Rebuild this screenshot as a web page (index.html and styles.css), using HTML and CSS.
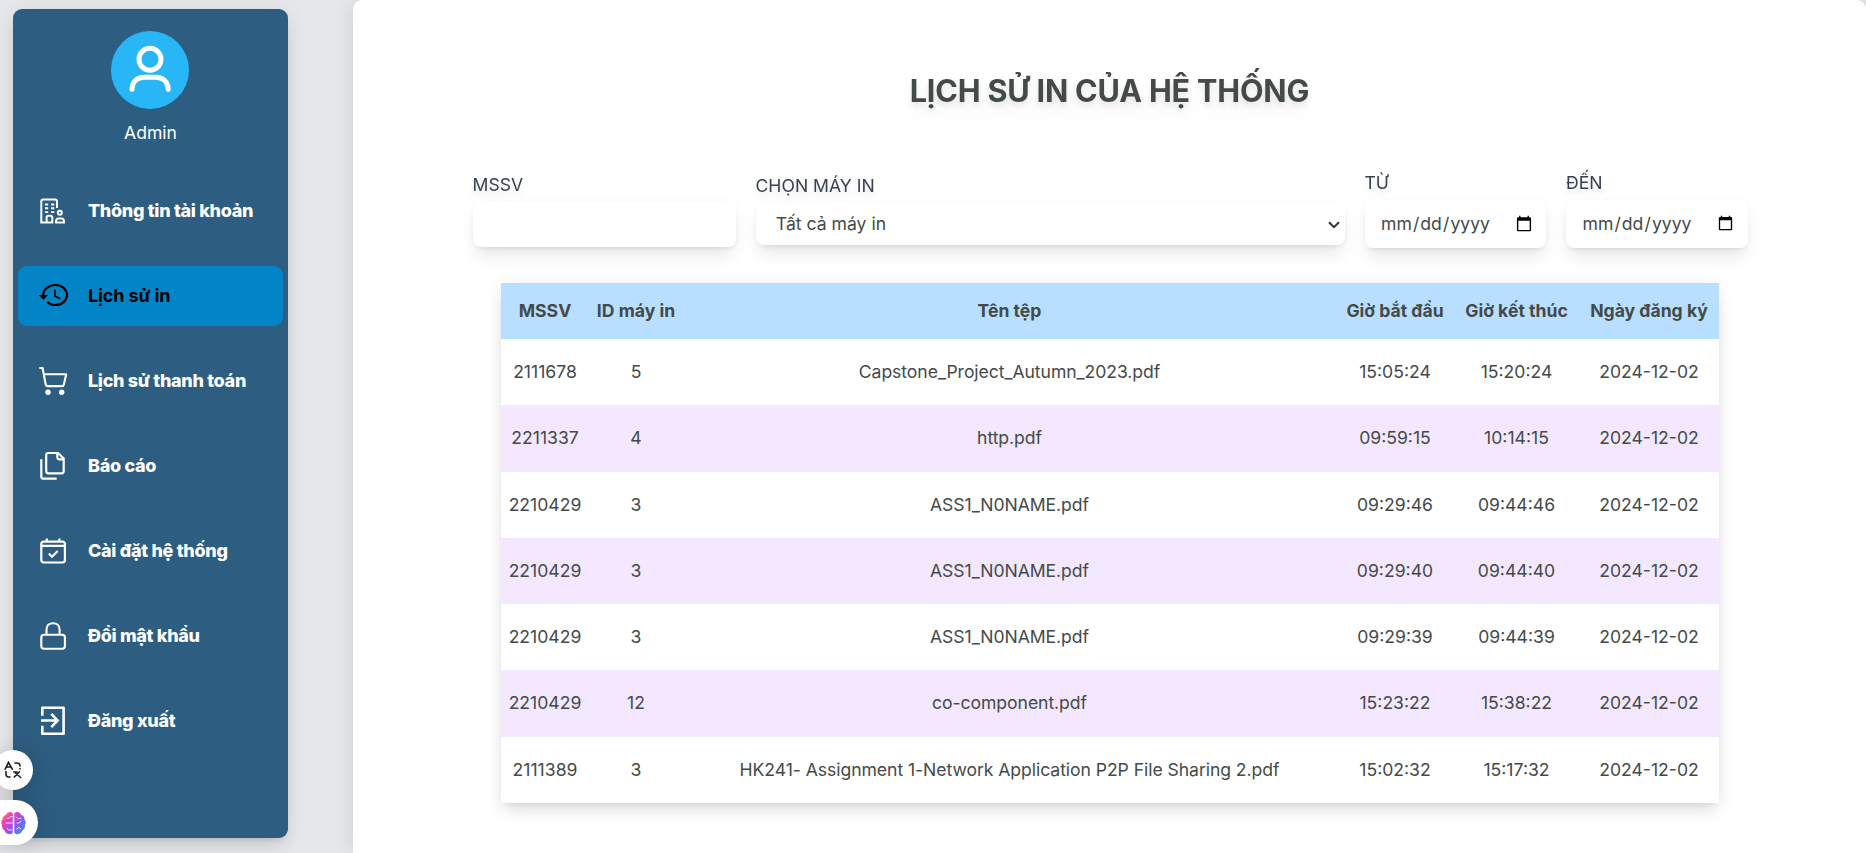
FILE: index.html
```html
<!DOCTYPE html>
<html lang="en-US">
<head>
<meta charset="utf-8">
<title>Lịch sử in</title>
<link rel="stylesheet" href="styles.css">
</head>
<body>
<div class="app">
  <aside class="sidebar">
    <div class="profile">
      <svg class="avatar" viewBox="0 0 78 78"><circle cx="39" cy="39" r="39" fill="#29b6f6"/><g fill="none" stroke="#fff" stroke-width="5" stroke-linecap="round"><circle cx="39" cy="28.3" r="11"/><path d="M21 58.2C21 51 26 46.3 33 46.3h12c7 0 12.200 4.700 12.200 11.900"/></g></svg>
      <span class="profile-name">Admin</span>
    </div>
    <nav class="menu">
      <a class="item"><svg class="icon" viewBox="0 0 30 30"><g stroke-width="2"><path d="M19 12V5.500Q19 3.500 17 3.500H5Q3.300 3.500 3.300 5.500V26.500H14.300V21.500Q14.300 19.700 12.300 19.700H10.500Q8.600 19.700 8.600 21.500V26.500"/><circle cx="21.800" cy="16.700" r="2" /><path d="M18 26.500Q17.700 22.500 20.500 22.500H23.500Q26.300 22.500 26 26.500Z"/></g><path stroke-width="1.900" stroke-dasharray="3.200 2.900" d="M7 8.500h9.500M7 12.300h9.500M7 16.100h9.500"/></svg><span>Thông tin tài khoản</span></a>
      <a class="item active"><svg class="icon" viewBox="0 0 30 30"><path stroke-width="2.200" d="M5.300 14C5.300 8.500 10.500 4 17.300 4S29 8.500 29 14 23.800 24 17.300 24Q12.500 24 9.300 21.200"/><path d="M.5 14H10.200L5.400 18.700Z" fill="currentColor" stroke="none"/><path stroke-width="1.800" d="M16.900 8.700V15L22.300 17.700"/></svg><span>Lịch sử in</span></a>
      <a class="item"><svg class="icon" viewBox="0 0 30 30"><path stroke-width="2.100" stroke-linejoin="round" d="M1.300 2H4.600L7.700 18.500Q8 20.100 9.600 20.100H24Q25.500 20.100 25.800 18.700L28.200 8.300H5.800"/><g fill="currentColor" stroke="none"><circle cx="10" cy="26.300" r="2.700"/><circle cx="23.700" cy="26.300" r="2.700"/></g></svg><span>Lịch sử thanh toán</span></a>
      <a class="item"><svg class="icon" viewBox="0 0 30 30"><g stroke-width="2.200"><path d="M10.500 2H20L25.700 7.500V20Q25.700 22.400 23.300 22.400H10.500Q8.200 22.400 8.200 20V4.300Q8.200 2 10.500 2ZM19.300 2V6Q19.300 8.300 21.600 8.300H25.600M3.300 8.300V25.400Q3.300 27.700 5.600 27.700H18.700"/></g></svg><span>Báo cáo</span></a>
      <a class="item"><svg class="icon" viewBox="0 0 30 30"><g stroke-width="2.200"><rect x="3.300" y="5.600" width="23.600" height="20.900" rx="2.500"/><path d="M3.300 9.800H27M8.800 2.500V5.600M21.400 2.500V5.600M10.800 17.500l3.200 3.200 5.700-5.700"/></g></svg><span>Cài đặt hệ thống</span></a>
      <a class="item"><svg class="icon" viewBox="0 0 30 30"><g stroke-width="2.100"><rect x="3.300" y="13.700" width="23.600" height="14" rx="2.700"/><path d="M8.500 13.700V8.500C8.500 4.500 11.300 2.200 15 2.200S21.600 4.500 21.600 8.500V13.700"/></g></svg><span>Đổi mật khẩu</span></a>
      <a class="item"><svg class="icon" viewBox="0 0 30 30"><g stroke-width="2.600"><path stroke-linejoin="round" d="M4.300 9.800V1.700H25.600V27.700H4.300V19.800"/><path d="M3 14.500H19.500M13.300 7.900L19.600 14.500 13.300 21.200"/></g></svg><span>Đăng xuất</span></a>
    </nav>
  </aside>

  <main class="panel">
    <h1 class="title">LỊCH SỬ IN CỦA HỆ THỐNG</h1>
    <form class="filters">
      <div class="field field-id"><label class="label" for="mssv">MSSV</label><input class="control text-input" id="mssv" type="text"></div>
      <div class="field field-printer"><label class="label" for="printer">CHỌN MÁY IN</label><div class="select-wrap"><select class="control select" id="printer"><option>Tất cả máy in</option></select><svg class="chevron" width="12" height="8" viewBox="0 0 12 8"><path d="M1 1.200L6 6.200 11 1.200" fill="none" stroke="#333" stroke-width="2"/></svg></div></div>
      <div class="field field-date"><label class="label" for="from">TỪ</label><input class="control date" id="from" type="date"></div>
      <div class="field field-date"><label class="label" for="to">ĐẾN</label><input class="control date" id="to" type="date"></div>
    </form>
    <table class="history">
      <colgroup><col class="c-id"><col class="c-printer"><col class="c-file"><col class="c-start"><col class="c-end"><col class="c-day"></colgroup>
      <thead><tr><th>MSSV</th><th>ID máy in</th><th>Tên tệp</th><th>Giờ bắt đầu</th><th>Giờ kết thúc</th><th>Ngày đăng ký</th></tr></thead>
      <tbody>
        <tr><td>2111678</td><td>5</td><td>Capstone_Project_Autumn_2023.pdf</td><td>15:05:24</td><td>15:20:24</td><td>2024-12-02</td></tr>
        <tr><td>2211337</td><td>4</td><td>http.pdf</td><td>09:59:15</td><td>10:14:15</td><td>2024-12-02</td></tr>
        <tr><td>2210429</td><td>3</td><td>ASS1_N0NAME.pdf</td><td>09:29:46</td><td>09:44:46</td><td>2024-12-02</td></tr>
        <tr><td>2210429</td><td>3</td><td>ASS1_N0NAME.pdf</td><td>09:29:40</td><td>09:44:40</td><td>2024-12-02</td></tr>
        <tr><td>2210429</td><td>3</td><td>ASS1_N0NAME.pdf</td><td>09:29:39</td><td>09:44:39</td><td>2024-12-02</td></tr>
        <tr><td>2210429</td><td>12</td><td>co-component.pdf</td><td>15:23:22</td><td>15:38:22</td><td>2024-12-02</td></tr>
        <tr><td>2111389</td><td>3</td><td>HK241- Assignment 1-Network Application P2P File Sharing 2.pdf</td><td>15:02:32</td><td>15:17:32</td><td>2024-12-02</td></tr>
      </tbody>
    </table>
  </main>
</div>

<div class="float translate"><svg width="18" height="18" viewBox="0 0 18 18" fill="none" stroke="#1c1c1c" stroke-width="1.600" stroke-linecap="round"><path d="M1.200 8.200L4.500 1.300 8.300 8.200M2.600 6H7M11 2H13Q16 2 16 5M16 7.500V8M2 10.500V13Q2 16 4.500 16H6M10.300 16L15.500 10.800M9.800 11H13M11.500 12L16.700 16.500"/></svg></div>
<div class="float brain"><svg width="25" height="24" viewBox="0 0 25 24"><defs><linearGradient id="brainFill" x1="0" y1="0.100" x2="1" y2="0.900"><stop offset="0" stop-color="#ff9d2e"/><stop offset=".25" stop-color="#f23cc0"/><stop offset=".6" stop-color="#8b55f0"/><stop offset="1" stop-color="#1f9dff"/></linearGradient></defs><path fill="url(#brainFill)" d="M11.800 2.500V21.500Q10.500 24 8 23 4.500 22.800 3.700 19.500.3 17.500 1.200 14-.8 11 1.500 8.500 1.500 4.800 4.900 4 6 .8 9.500 1 11.500 1 11.800 2.500ZM13.300 2.500V21.500Q14.500 24 17 23 20.500 22.800 21.300 19.500 24.700 17.500 23.800 14 25.800 11 23.500 8.500 23.500 4.800 20.100 4 19 .8 15.500 1 13.500 1 13.300 2.500Z"/><g fill="none" stroke="#f4dcff" stroke-width="1" stroke-linecap="round"><path d="M5 12H11.500M6 7.500Q9 8 9.500 5.500H11M6 17.500Q7 20 11 19M15.500 6L17.500 8 20 7M16 12H18L20.500 10M15.500 18L18 16.500 19.500 17.500"/></g></svg></div>
</body>
</html>
```
FILE: styles.css
```css
*, *::before, *::after { box-sizing: border-box; }
html { overflow: hidden; }
body {
  margin: 0;
  height: 853px;
  overflow: hidden;
  position: relative;
  background: #e5e7eb;
  font-family: Inter, "Noto Sans", sans-serif;
  font-size: 17.6px;
  line-height: 26.4px;
  color: #444a49;
}
.app { display: flex; gap: 65px; align-items: flex-start; padding-left: 13px; height: 853px; }
.sidebar {
  width: 275px;
  height: 829px;
  margin-top: 9px;
  flex: none;
  padding: 22px 5px 0;
  border-radius: 9px;
  background: #2d5d81;
  color: #fff;
  box-shadow: 0 11px 16.500px -3.300px rgba(0,0,0,.1), 0 4.400px 6.600px -4.400px rgba(0,0,0,.1), 0 0 22px rgba(0,0,0,.06);
}
.profile { display: flex; flex-direction: column; align-items: center; gap: 11px; height: 150px; }
.avatar { width: 78px; height: 78px; flex: none; margin-right: 1px; }
.menu { display: flex; flex-direction: column; gap: 25px; }
.item {
  display: flex;
  align-items: center;
  gap: 20px;
  height: 60px;
  padding-left: 20px;
  border-radius: 9px;
  font-size: 18px;
  font-weight: 800;
  letter-spacing: -0.310px;
  white-space: nowrap;
}
.item.active { background: #0284c7; color: #000; font-weight: 700; letter-spacing: -0.100px; }
.icon { width: 30px; height: 30px; flex: none; fill: none; stroke: currentColor; }

.panel {
  flex: 1;
  min-width: 0;
  height: 853px;
  padding-top: 69px;
  display: flex;
  flex-direction: column;
  align-items: center;
  border-radius: 9px 9px 0 0;
  background: #fff;
  box-shadow: 0 0 22px rgba(0,0,0,.1);
}
.title {
  margin: 0;
  font-size: 30.600px;
  letter-spacing: -0.180px;
  line-height: 44px;
  font-weight: 700;
  filter: drop-shadow(0 11px 8px rgba(0,0,0,.04)) drop-shadow(0 4px 3px rgba(0,0,0,.1));
}
.filters { display: flex; align-items: center; gap: 20px; width: 1276px; height: 78px; margin: 57px 0 0 2px; }
.field { display: flex; flex-direction: column; gap: 3.500px; }
.field-id { width: 263px; }
.field-printer { width: 589px; }
.field-date { width: 181.500px; }
.label { color: #374151; filter: drop-shadow(0 4px 3px rgba(0,0,0,.1)); }
.control {
  zoom: 1.1;
  display: block;
  width: 100%;
  border: 0;
  border-radius: 7px;
  background: #fff;
  color: #444a49;
  font-family: inherit;
  font-size: 16px;
  line-height: 24px;
  box-shadow: 0 10px 15px -3px rgba(0,0,0,.1), 0 4px 6px -4px rgba(0,0,0,.1), 0 0 6px rgba(0,0,0,.03);
}
.text-input { height: 41px; }
.select-wrap { position: relative; }
.select { appearance: none; height: 39px; padding: 0 0 0 18.500px; }
.chevron { position: absolute; right: 5px; top: 18px; pointer-events: none; }
.date { height: 43.600px; padding: 0 10px 0 14px; }

.history {
  width: 1218px;
  margin-top: 35px;
  border-collapse: collapse;
  table-layout: fixed;
  text-align: center;
  background: #fff;
  box-shadow: 0 11px 16.500px -3.300px rgba(0,0,0,.1), 0 4.400px 6.600px -4.400px rgba(0,0,0,.1), 0 0 16px rgba(0,0,0,.06);
}
.c-id { width: 88px; }
.c-printer { width: 94px; }
.c-file { width: 653px; }
.c-start { width: 118px; }
.c-end { width: 125px; }
.c-day { width: 140px; }
.history th, .history td { padding: 0 0 0 1px; white-space: nowrap; }
.history td:nth-child(3) { letter-spacing: -0.060px; }
.history thead tr { height: 56px; background: #b8dfff; }
.history th { font-weight: 700; }
.history tbody tr { height: 66.300px; }
.history tbody tr:nth-child(even) { background: #f3e8ff; }

.float { position: absolute; display: flex; align-items: center; background: #fff; box-shadow: 0 2px 22px rgba(0,0,0,.16); }
.translate { left: -7px; top: 750px; width: 40px; height: 40px; border-radius: 50%; padding-left: 11px; }
.brain { left: -8px; top: 800px; width: 46px; height: 45px; border-radius: 0 23px 23px 0; padding-left: 9px; }
```
